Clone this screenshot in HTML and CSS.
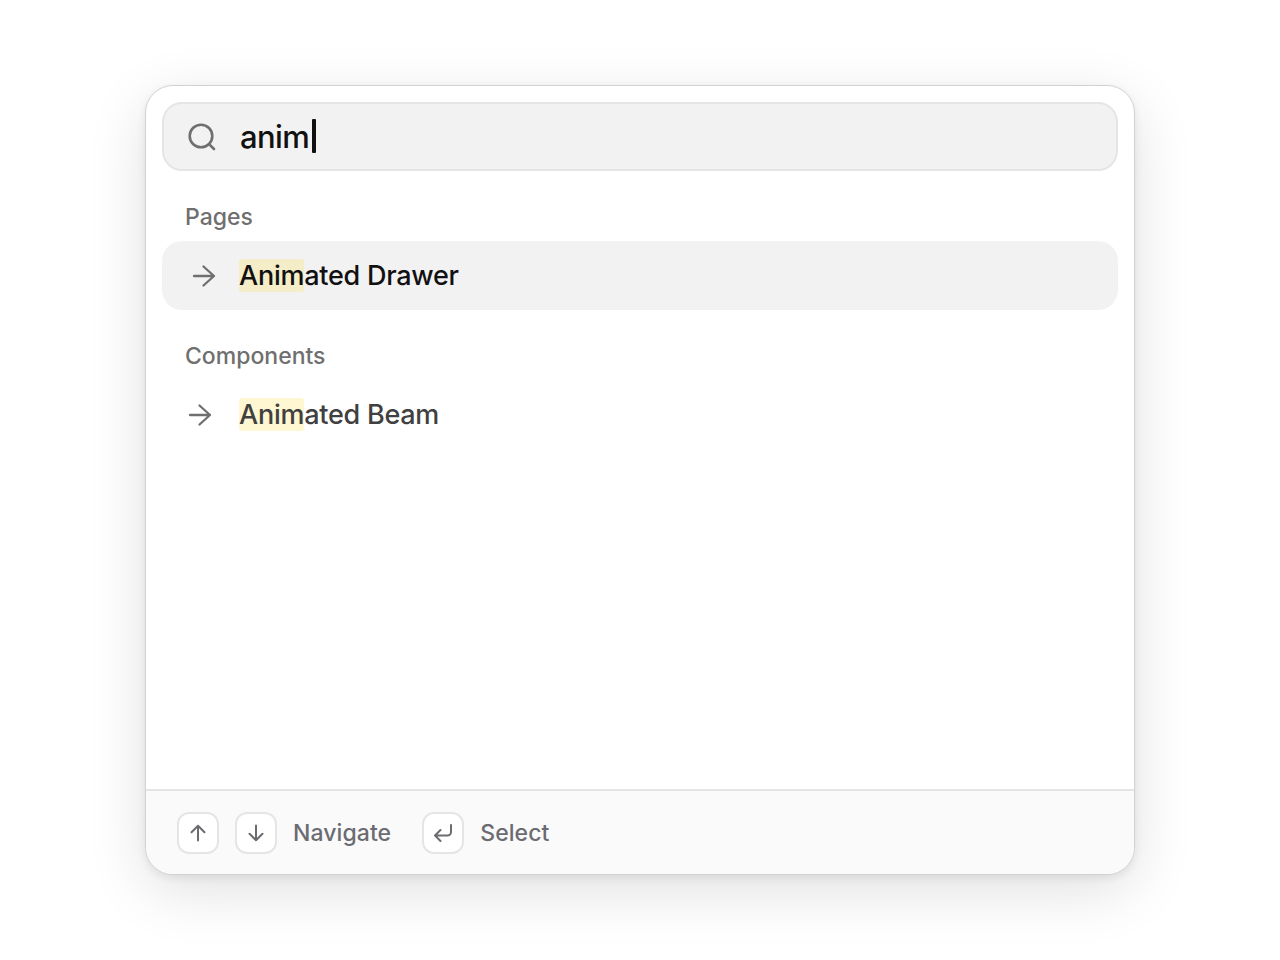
FILE: index.html
```html
<!DOCTYPE html>
<html lang="en">
<head>
<meta charset="utf-8">
<title>Command menu</title>
<link rel="stylesheet" href="styles.css">
</head>
<body>
<div class="palette">
  <div class="main">
    <div class="search">
      <svg class="search-icon" viewBox="0 0 28 28" fill="none"><circle cx="13" cy="13" r="11.300"/><path d="M21.300 21.300 26 26"/></svg>
      <span class="query">anim</span><span class="caret"></span>
    </div>
    <div class="group-label">Pages</div>
    <div class="item active">
      <svg class="arrow" viewBox="0 0 24 24" fill="none"><path d="M2 12h20M11.500 2.500 22 12l-10.500 9.500"/></svg>
      <span class="item-text"><mark>Anim</mark>ated Drawer</span>
    </div>
    <div class="group-label">Components</div>
    <div class="item">
      <svg class="arrow" viewBox="0 0 24 24" fill="none"><path d="M2 12h20M11.500 2.500 22 12l-10.500 9.500"/></svg>
      <span class="item-text"><mark>Anim</mark>ated Beam</span>
    </div>
  </div>
  <div class="footer">
    <span class="key"><svg viewBox="0 0 18 18" fill="none"><path d="M9 16.500V1.800M2.500 8.300 9 1.800l6.500 6.500"/></svg></span>
    <span class="key"><svg viewBox="0 0 18 18" fill="none"><path d="M9 1.500v14.700M2.500 9.700 9 16.200l6.500-6.500"/></svg></span>
    <span class="hint">Navigate</span>
    <span class="key key-select"><svg viewBox="0 0 18 18" fill="none"><path d="M17 1v7a3.500 3.500 0 0 1-3.500 3.500H1M6.500 6 1 11.500 6.500 17"/></svg></span>
    <span class="hint">Select</span>
  </div>
</div>
</body>
</html>
```
FILE: styles.css
```css
* { box-sizing: border-box; }
html, body { height: 100%; }
body {
  margin: 0;
  height: 960px;
  background: #fff;
  font-family: Inter, "Liberation Sans", sans-serif;
  display: flex;
  justify-content: center;
  padding-top: 85px;
  overflow: hidden;
}
.palette {
  width: 990px;
  height: 790px;
  background: #fff;
  border: 1px solid #d2d2d2;
  border-radius: 28px;
  box-shadow: 0 3px 8px rgba(0,0,0,.08), 0 16px 60px rgba(0,0,0,.12);
  display: flex;
  flex-direction: column;
  overflow: hidden;
}
.main { flex: 1; padding: 16px 16px 0; }
.search {
  height: 69px;
  background: #f2f2f2;
  border: 2px solid #e5e5e5;
  border-radius: 20px;
  display: flex;
  align-items: center;
  padding-left: 24px;
}
.search-icon { width: 28px; height: 28px; stroke: #6f6f6f; stroke-width: 2.600; stroke-linecap: round; flex: none; }
.query { margin-left: 24px; font-size: 31px; font-weight: 450; color: #111; letter-spacing: -.6px; }
.caret { width: 4px; height: 34px; margin: 0 0 2px 3px; background: #111; border-radius: 1px; }
.group-label { font-size: 23px; font-weight: 500; line-height: 28px; color: #6f6f6f; padding-left: 23px; margin-top: 32px; }
.item {
  height: 69px;
  margin-top: 10px;
  border-radius: 20px;
  display: flex;
  align-items: center;
  padding-left: 26px;
  color: #404040;
}
.item.active { background: #f2f2f2; color: #111; padding-left: 30px; }
.item.active .item-text { margin-left: 23px; }
.arrow { width: 24px; height: 24px; stroke: #6f6f6f; stroke-width: 2.300; stroke-linecap: round; stroke-linejoin: round; flex: none; }
.item-text { margin-left: 27px; font-size: 27px; font-weight: 450; line-height: 32px; letter-spacing: -.25px; }
mark { background: rgba(253, 224, 71, .25); color: inherit; border-radius: 3px; }
.footer {
  height: 85px;
  flex: none;
  background: #fafafa;
  border-top: 2px solid #e5e5e5;
  display: flex;
  align-items: center;
  padding-left: 31px;
}
.key {
  width: 42px;
  height: 42px;
  background: #fff;
  border: 2px solid #e5e5e5;
  border-radius: 12px;
  display: flex;
  align-items: center;
  justify-content: center;
  margin-right: 16px;
}
.key svg { width: 18px; height: 18px; stroke: #6b6b70; stroke-width: 2; stroke-linecap: round; stroke-linejoin: round; }
.hint { font-size: 23px; font-weight: 500; letter-spacing: .08px; color: #6b6b72; }
.key-select { margin-left: 31px; }
```
